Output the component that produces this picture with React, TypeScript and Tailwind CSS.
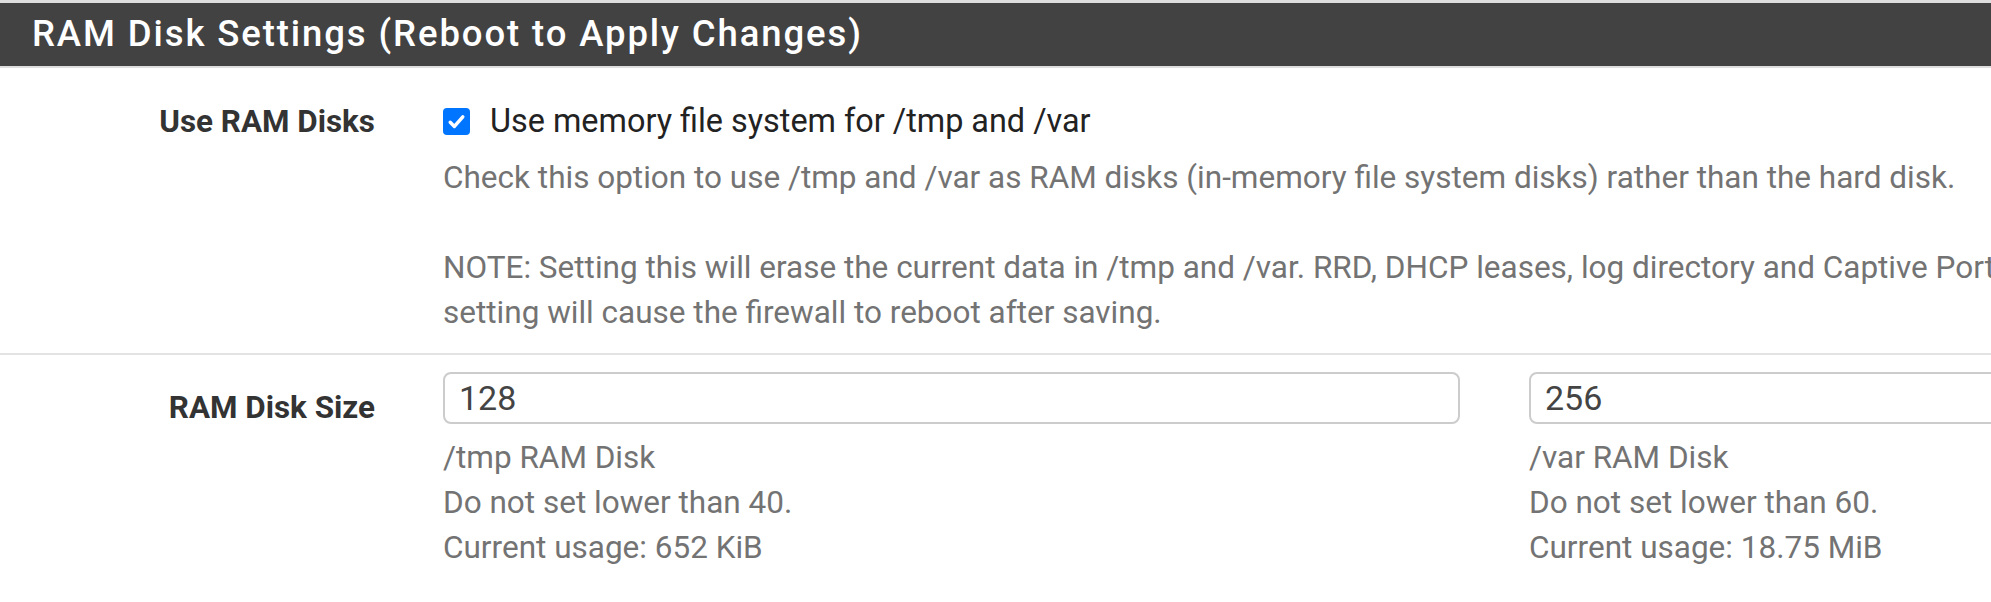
import React from "react";

export default function App() {
  const sizes = [
    { value: "128", name: "/tmp RAM Disk", min: "40", usage: "652 KiB" },
    { value: "256", name: "/var RAM Disk", min: "60", usage: "18.75 MiB" },
  ];

  return (
    <div className="h-[602px] w-full overflow-hidden bg-white font-['Roboto',sans-serif]">
      {/* Panel heading */}
      <div className="border-t-[3px] border-b-2 border-[#dedede] bg-[#424242]">
        <h2 className="flex h-[63px] items-center whitespace-nowrap pl-[32px] text-[36.5px] font-medium tracking-[1.9px] text-white">
          RAM Disk Settings (Reboot to Apply Changes)
        </h2>
      </div>

      {/* Use RAM Disks */}
      <div className="flex border-b-2 border-[#e3e3e3] pt-[31px] pb-[18px]">
        <div className="w-[375px] shrink-0 text-right text-[31.4px] font-bold leading-[45.7px] text-[#333333]">
          Use RAM Disks
        </div>
        <div className="ml-[68px] w-[2102px] shrink-0">
          <label className="flex items-center whitespace-nowrap text-[32.4px] leading-[45.7px] text-[#222222]">
            <span className="flex h-[27px] w-[27px] items-center justify-center rounded-[4px] bg-[#0075ff]">
              <svg viewBox="0 0 16 16" className="h-[21px] w-[21px]" fill="none">
                <path
                  d="M3.2 8.6 6.4 11.8 12.8 4.4"
                  stroke="white"
                  strokeWidth="2.6"
                  strokeLinecap="round"
                  strokeLinejoin="round"
                />
              </svg>
            </span>
            <span className="ml-[20px]">Use memory file system for /tmp and /var</span>
          </label>
          <div className="mt-[10px] whitespace-nowrap text-[31.5px] leading-[45px] text-[#737373]">
            Check this option to use /tmp and /var as RAM disks (in-memory file system disks) rather than the hard disk.
            <br />
            <br />
            NOTE: Setting this will erase the current data in /tmp and /var. RRD, DHCP leases, log directory and Captive Portal data will be lost. Changing this
            <br />
            setting will cause the firewall to reboot after saving.
          </div>
        </div>
      </div>

      {/* RAM Disk Size */}
      <div className="flex pt-[17px]">
        <div className="w-[375px] shrink-0 pt-[13px] text-right text-[31.4px] font-bold leading-[45.7px] text-[#333333]">
          RAM Disk Size
        </div>
        <div className="ml-[68px] flex shrink-0 gap-[69px]">
          {sizes.map((s) => (
            <div key={s.name} className="w-[1017px] shrink-0">
              <input
                type="text"
                defaultValue={s.value}
                className="h-[52px] w-full rounded-[8px] border-2 border-[#cccccc] bg-white pl-[14px] text-[34px] text-[#444444] outline-none"
              />
              <div className="mt-[11px] text-[31.5px] leading-[45px] text-[#737373]">
                <div>{s.name}</div>
                <div>Do not set lower than {s.min}.</div>
                <div>Current usage: {s.usage}</div>
              </div>
            </div>
          ))}
        </div>
      </div>
    </div>
  );
}
